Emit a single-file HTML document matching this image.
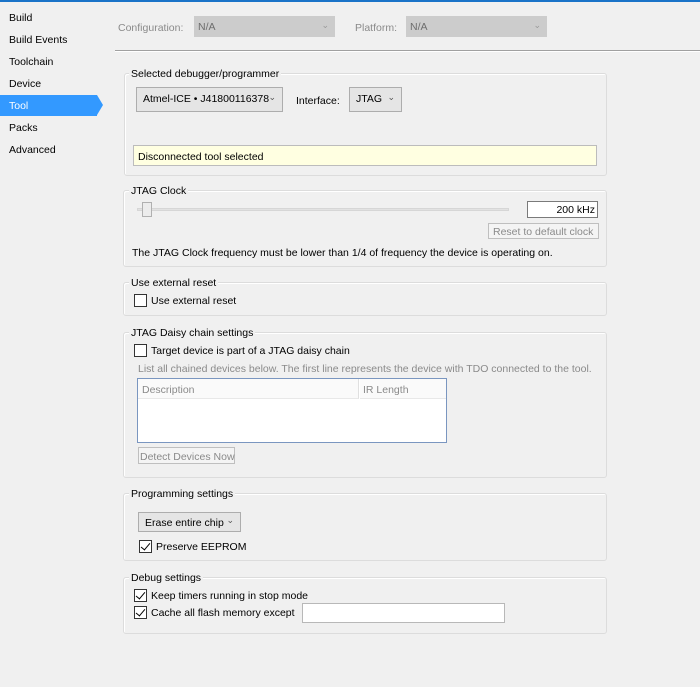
<!DOCTYPE html>
<html><head><style>
*{margin:0;padding:0;box-sizing:border-box}
body{width:700px;height:687px;background:#f0f0f0;font-family:"Liberation Sans",sans-serif;font-size:10.5px;color:#000;position:relative;overflow:hidden}
.a{position:absolute;white-space:nowrap}
.t{margin-top:1px}
.grp{position:absolute;border:1px solid #dcdcdc;border-radius:3px;box-shadow:inset 1px 1px 0 #fff}
.gt{position:absolute;background:#f0f0f0;padding:0 2px;white-space:nowrap;margin-top:1px}
.cmb{position:absolute;background:#e5e5e5;border:1px solid #adadad}
.cmb span{position:absolute;left:6px;top:5px}
.cmb i{position:absolute;right:6px;top:4px;font-style:normal;font-size:9px;color:#555}
.cb{position:absolute;width:13px;height:13px;border:1px solid #333;background:#fff}
.cb.k::after{content:"";position:absolute;left:3px;top:0px;width:4px;height:8px;border:solid #000;border-width:0 1.5px 1.5px 0;transform:rotate(40deg)}
.dis{color:#8a8a8a}
</style></head><body>
<div class="a" style="left:0;top:0;width:700px;height:2px;background:#1a73c8"></div>
<div class="a" style="left:9px;top:12px">Build</div>
<div class="a" style="left:9px;top:34px">Build Events</div>
<div class="a" style="left:9px;top:56px">Toolchain</div>
<div class="a" style="left:9px;top:78px">Device</div>
<div class="a" style="left:0;top:95px;width:97px;height:21px;background:#3399ff"></div>
<div class="a" style="left:97px;top:95px;width:0;height:0;border-top:10.5px solid transparent;border-bottom:10.5px solid transparent;border-left:6px solid #3399ff"></div>
<div class="a" style="left:9px;top:100px;color:#fff">Tool</div>
<div class="a" style="left:9px;top:122px">Packs</div>
<div class="a" style="left:9px;top:144px">Advanced</div>

<div class="a dis" style="left:118px;top:22px">Configuration:</div>
<div class="a" style="left:194px;top:16px;width:141px;height:21px;background:#cccccc"><span class="a" style="left:4px;top:5px;color:#6d6d6d">N/A</span><span class="a" style="right:6px;top:4px;color:#999;font-size:9px">&#8964;</span></div>
<div class="a dis" style="left:355px;top:22px">Platform:</div>
<div class="a" style="left:406px;top:16px;width:141px;height:21px;background:#cccccc"><span class="a" style="left:4px;top:5px;color:#6d6d6d">N/A</span><span class="a" style="right:6px;top:4px;color:#999;font-size:9px">&#8964;</span></div>
<div class="a" style="left:115px;top:50px;width:585px;height:1px;background:#a0a0a0"></div>
<div class="a" style="left:115px;top:51px;width:585px;height:1px;background:#fff"></div>

<div class="grp" style="left:124px;top:73px;width:483px;height:103px"></div>
<div class="gt" style="left:129px;top:67px">Selected debugger/programmer</div>
<div class="cmb" style="left:136px;top:87px;width:147px;height:25px"><span>Atmel-ICE • J41800116378</span><i>&#8964;</i></div>
<div class="a" style="left:296px;top:95px">Interface:</div>
<div class="cmb" style="left:349px;top:87px;width:53px;height:25px"><span>JTAG</span><i>&#8964;</i></div>
<div class="a" style="left:133px;top:145px;width:464px;height:21px;background:#ffffe1;border:1px solid #bcbcbc"><span class="a" style="left:4px;top:5px">Disconnected tool selected</span></div>

<div class="grp" style="left:123px;top:190px;width:484px;height:77px"></div>
<div class="gt" style="left:129px;top:184px">JTAG Clock</div>
<div class="a" style="left:137px;top:208px;width:372px;height:3px;background:#e2e2e2;border:1px solid #d6d6d6"></div>
<div class="a" style="left:142px;top:202px;width:10px;height:15px;background:#ececec;border:1px solid #b0b0b0"></div>
<div class="a" style="left:527px;top:201px;width:71px;height:17px;background:#fff;border:1px solid #7a7a7a"><span class="a" style="right:2px;top:2px">200 kHz</span></div>
<div class="a dis" style="left:488px;top:223px;width:111px;height:16px;border:1px solid #bfbfbf;background:#f4f4f4"><span class="a" style="left:4px;top:2px">Reset to default clock</span></div>
<div class="a" style="left:132px;top:247px">The JTAG Clock frequency must be lower than 1/4 of frequency the device is operating on.</div>

<div class="grp" style="left:123px;top:282px;width:484px;height:34px"></div>
<div class="gt" style="left:129px;top:276px">Use external reset</div>
<div class="cb" style="left:134px;top:294px"></div>
<div class="a" style="left:151px;top:295px">Use external reset</div>

<div class="grp" style="left:123px;top:332px;width:484px;height:146px"></div>
<div class="gt" style="left:129px;top:326px">JTAG Daisy chain settings</div>
<div class="cb" style="left:134px;top:344px"></div>
<div class="a" style="left:151px;top:345px">Target device is part of a JTAG daisy chain</div>
<div class="a dis" style="left:138px;top:363px">List all chained devices below. The first line represents the device with TDO connected to the tool.</div>
<div class="a" style="left:137px;top:378px;width:310px;height:65px;background:#fff;border:1px solid #7a96c0"></div>
<div class="a" style="left:138px;top:379px;width:221px;height:20px;background:#fafafa;border-right:1px solid #e0e0e0;border-bottom:1px solid #e8e8e8"><span class="a dis" style="left:4px;top:5px">Description</span></div>
<div class="a" style="left:360px;top:379px;width:86px;height:20px;background:#fafafa;border-bottom:1px solid #e8e8e8"><span class="a dis" style="left:3px;top:5px">IR Length</span></div>
<div class="a dis" style="left:138px;top:447px;width:97px;height:17px;border:1px solid #bfbfbf;background:#f4f4f4"><span class="a" style="left:1px;top:3px">Detect Devices Now</span></div>

<div class="grp" style="left:123px;top:493px;width:484px;height:68px"></div>
<div class="gt" style="left:129px;top:487px">Programming settings</div>
<div class="cmb" style="left:138px;top:512px;width:103px;height:20px"><span style="top:4px">Erase entire chip</span><i style="top:2px">&#8964;</i></div>
<div class="cb k" style="left:139px;top:540px"></div>
<div class="a" style="left:156px;top:541px">Preserve EEPROM</div>

<div class="grp" style="left:123px;top:577px;width:484px;height:57px"></div>
<div class="gt" style="left:129px;top:571px">Debug settings</div>
<div class="cb k" style="left:134px;top:589px"></div>
<div class="a" style="left:151px;top:590px">Keep timers running in stop mode</div>
<div class="cb k" style="left:134px;top:606px"></div>
<div class="a" style="left:151px;top:607px">Cache all flash memory except</div>
<div class="a" style="left:302px;top:603px;width:203px;height:20px;background:#fff;border:1px solid #b8b8b8"></div>
</body></html>
